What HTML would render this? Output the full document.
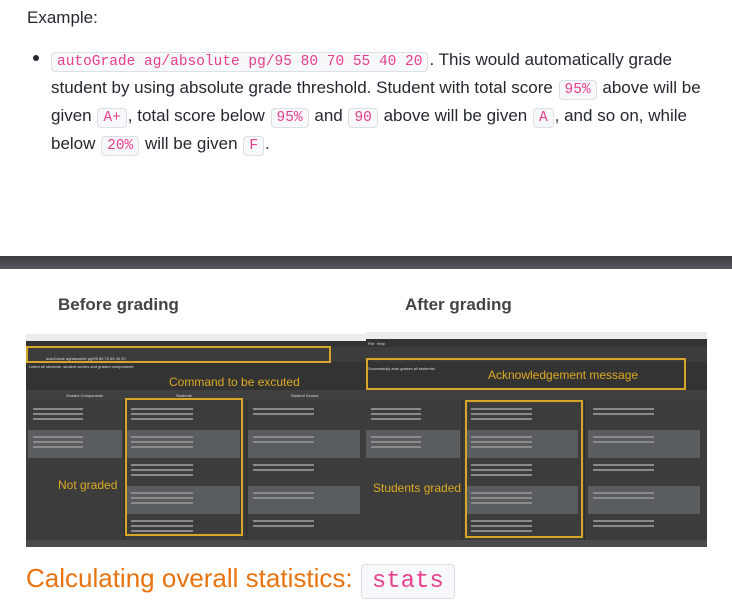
<!DOCTYPE html><html><head><style>
*{margin:0;padding:0;box-sizing:border-box}
body{width:732px;height:615px;background:#fff;position:relative;overflow:hidden;font-family:"Liberation Sans",sans-serif;color:#24292f}
.a{position:absolute}
code{font-family:"Liberation Mono",monospace;color:#e83e8c;background:#f6f8fa;border:1px solid #dcdfe3;border-radius:4px;padding:1px 5px;font-size:14.5px;margin:0 1px}
.p{font-size:17px;line-height:25px}
.app{background:#3c3c3c;overflow:hidden}
.tb{background:#ececec;height:7px}
.y{border:2px solid #d8a627}
.ann{color:#dcaa22;font-size:12px}
.t{font-size:4px;color:#ddd;line-height:5px}
.card{height:28px;padding:3px 5px}
.card i{display:block;height:2px;margin:3px 0;background:#8a8a8a;width:60%}
.dk{background:#3c3c3c}.lt{background:#595d5f}
</style></head><body>
<div class="a p" style="left:27px;top:5px">Example:</div>
<div class="a" style="left:33px;top:55px;width:6px;height:6px;border-radius:3px;background:#24292f"></div>
<div class="a p" style="left:51px;top:47px;width:690px;white-space:nowrap">
<code style="margin-left:0">autoGrade ag/absolute pg/95 80 70 55 40 20</code>. This would automatically grade<br>student by using absolute grade threshold. Student with total score <code>95%</code> above will be<br>given <code>A+</code>, total score below <code>95%</code> and <code>90</code> above will be given <code>A</code>, and so on, while<br>below <code>20%</code> will be given <code>F</code>.</div>
<div class="a" style="left:0;top:256px;width:732px;height:13px;background:linear-gradient(#3a3c3e,#55585b)"></div>
<div class="a" style="left:58px;top:295px;font-size:17px;font-weight:bold;color:#444">Before grading</div>
<div class="a" style="left:405px;top:295px;font-size:17px;font-weight:bold;color:#444">After grading</div>

<div class="a app" style="left:26px;top:334px;width:340px;height:213px">
<div class="tb"></div>
<div class="a" style="left:0;top:7px;width:340px;height:6px;background:#333"></div>
<div class="a t" style="left:20px;top:22px">autoGrade ag/absolute pg/95 80 70 55 40 20</div>
<div class="a" style="left:0;top:28px;width:340px;height:28px;background:#333"></div>
<div class="a t" style="left:3px;top:30px">Listed all students, student scores and graded components</div>
<div class="a" style="left:0;top:56px;width:340px;height:10px;background:#404040"></div>
<div class="a t" style="left:40px;top:59px">Graded Components</div><div class="a t" style="left:150px;top:59px">Students</div><div class="a t" style="left:265px;top:59px">Student Scores</div>
<div class="a card dk" style="left:2px;top:68px;width:94px"><i></i><i></i><i></i></div>
<div class="a card lt" style="left:2px;top:96px;width:94px"><i></i><i></i><i></i></div>
<div class="a" style="left:98px;top:66px;width:1px;height:140px;background:#2c2c2c"></div>
<div class="a" style="left:220px;top:66px;width:1px;height:140px;background:#2c2c2c"></div>
<div class="a card dk" style="left:100px;top:68px;width:114px"><i></i><i></i><i></i></div>
<div class="a card lt" style="left:100px;top:96px;width:114px"><i></i><i></i><i></i></div>
<div class="a card dk" style="left:100px;top:124px;width:114px"><i></i><i></i><i></i></div>
<div class="a card lt" style="left:100px;top:152px;width:114px"><i></i><i></i><i></i></div>
<div class="a card dk" style="left:100px;top:180px;width:114px"><i></i><i></i><i></i></div>
<div class="a card dk" style="left:222px;top:68px;width:112px"><i></i><i></i></div>
<div class="a card lt" style="left:222px;top:96px;width:112px"><i></i><i></i></div>
<div class="a card dk" style="left:222px;top:124px;width:112px"><i></i><i></i></div>
<div class="a card lt" style="left:222px;top:152px;width:112px"><i></i><i></i></div>
<div class="a card dk" style="left:222px;top:180px;width:112px"><i></i><i></i></div>
<div class="a" style="left:0;top:206px;width:340px;height:7px;background:#4a4a4a"></div>
</div>
<div class="a y" style="left:26px;top:346px;width:305px;height:17px"></div>
<div class="a y" style="left:125px;top:398px;width:118px;height:138px"></div>
<div class="a ann" style="left:169px;top:375px">Command to be excuted</div>
<div class="a ann" style="left:58px;top:478px">Not graded</div>

<div class="a app" style="left:366px;top:332px;width:341px;height:215px">
<div class="tb"></div>
<div class="a" style="left:0;top:7px;width:341px;height:8px;background:#333"></div>
<div class="a t" style="left:2px;top:9px">File&nbsp;&nbsp;Help</div>
<div class="a" style="left:0;top:30px;width:341px;height:28px;background:#333"></div>
<div class="a t" style="left:2px;top:34px">Successfully auto grades all students!</div>
<div class="a" style="left:0;top:58px;width:341px;height:10px;background:#404040"></div>
<div class="a card dk" style="left:0;top:70px;width:94px"><i></i><i></i><i></i></div>
<div class="a card lt" style="left:0;top:98px;width:94px"><i></i><i></i><i></i></div>
<div class="a" style="left:96px;top:68px;width:1px;height:140px;background:#2c2c2c"></div>
<div class="a" style="left:218px;top:68px;width:1px;height:140px;background:#2c2c2c"></div>
<div class="a card dk" style="left:100px;top:70px;width:112px"><i></i><i></i><i></i></div>
<div class="a card lt" style="left:100px;top:98px;width:112px"><i></i><i></i><i></i></div>
<div class="a card dk" style="left:100px;top:126px;width:112px"><i></i><i></i><i></i></div>
<div class="a card lt" style="left:100px;top:154px;width:112px"><i></i><i></i><i></i></div>
<div class="a card dk" style="left:100px;top:182px;width:112px"><i></i><i></i><i></i></div>
<div class="a card dk" style="left:222px;top:70px;width:112px"><i></i><i></i></div>
<div class="a card lt" style="left:222px;top:98px;width:112px"><i></i><i></i></div>
<div class="a card dk" style="left:222px;top:126px;width:112px"><i></i><i></i></div>
<div class="a card lt" style="left:222px;top:154px;width:112px"><i></i><i></i></div>
<div class="a card dk" style="left:222px;top:182px;width:112px"><i></i><i></i></div>
<div class="a" style="left:0;top:208px;width:341px;height:7px;background:#4a4a4a"></div>
</div>
<div class="a y" style="left:366px;top:358px;width:320px;height:32px"></div>
<div class="a y" style="left:465px;top:400px;width:118px;height:138px"></div>
<div class="a ann" style="left:488px;top:368px">Acknowledgement message</div>
<div class="a ann" style="left:373px;top:481px">Students graded</div>

<div class="a" style="left:26px;top:563px;font-size:26px;color:#e8730f">Calculating overall statistics: <code style="font-size:24px;padding:3px 10px">stats</code></div>
</body></html>
